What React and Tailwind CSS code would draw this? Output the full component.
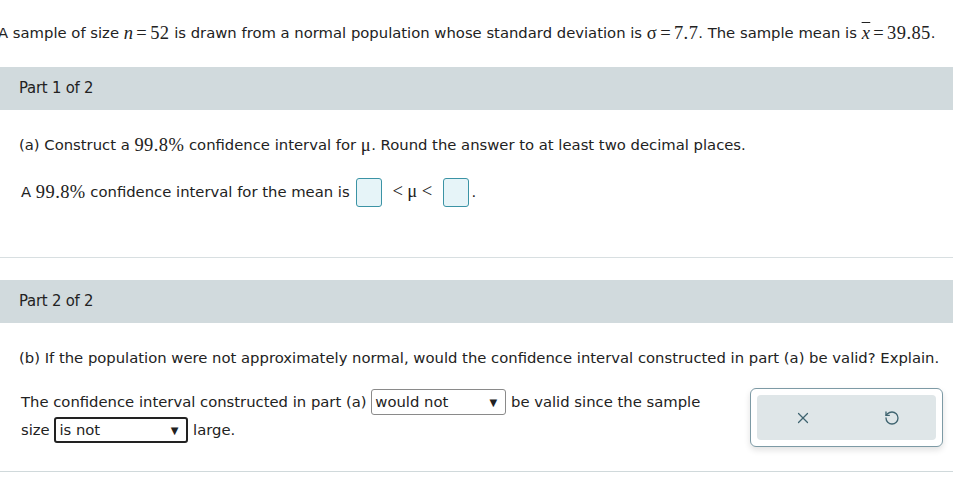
import { X, RotateCcw } from 'lucide-react';

const sans = { fontFamily: '"DejaVu Sans", Verdana, sans-serif' };

function M({ children, italic }) {
    return (
        <span className={`font-['Liberation_Serif',serif] text-[18.5px] tracking-[0.4px] leading-none ${italic ? 'italic' : ''}`}>
            {children}
        </span>
    );
}

const Eq = () => <span className="mx-[3px]">=</span>;

function AnswerBox() {
    return <span className="inline-block w-[26px] h-[29px] align-middle rounded-[3px] border border-[#3b93a5] bg-[#e6f4f8]" />;
}

function Select({ value, width, focused }) {
    return (
        <span
            className={[
                'inline-flex items-center justify-between align-middle h-[26px] pl-[3px] pr-[8px] rounded-[3px] bg-white',
                focused ? 'border-2 border-[#222]' : 'border border-[#8a8a8a]',
            ].join(' ')}
            style={{ width }}
        >
            <span>{value}</span>
            <span className="text-[10px]">▼</span>
        </span>
    );
}

function PartHeader({ children }) {
    return (
        <div className="h-[43px] bg-[#d1dadd] flex items-center pl-[19px] text-[16.5px] text-[#222] font-['DejaVu_Sans_Condensed','DejaVu_Sans',sans-serif] tracking-[-0.2px]">
            {children}
        </div>
    );
}

export default function App() {
    return (
        <div className="w-[953px] h-[482px] bg-white text-[#222] text-[14.8px] overflow-hidden" style={sans}>
            <div className="h-[67px] flex items-center -ml-[2px] pb-[1px] whitespace-nowrap">
                A sample of size&nbsp;<M italic>n</M><M><Eq />52</M>&nbsp;is drawn from a normal population whose standard deviation is&nbsp;
                <M>σ<Eq />7.7</M>. The sample mean is&nbsp;
                <M><span className="italic overline">x</span><Eq />39.85</M>.
            </div>

            <PartHeader>Part 1 of 2</PartHeader>

            <div className="pl-[19px] pt-[23px]">
                <div className="h-[24px] flex items-center">
                    (a) Construct a&nbsp;<M>99.8%</M>&nbsp;confidence interval for&nbsp;<M>μ</M>. Round the answer to at least two decimal places.
                </div>
                <div className="mt-[19px] pl-[2px] h-[32px] flex items-center">
                    A&nbsp;<M>99.8%</M>&nbsp;confidence interval for the mean is&nbsp;
                    <span className="ml-[2px]"><AnswerBox /></span>
                    <span className="mx-[10px]"><M>&lt;&thinsp;μ&thinsp;&lt;</M></span>
                    <AnswerBox />
                    <span className="ml-[3px]">.</span>
                </div>
            </div>

            <div className="mt-[49px] border-t border-[#d8dfe1]" />
            <div className="h-[22px]" />

            <PartHeader>Part 2 of 2</PartHeader>

            <div className="pl-[19px] pt-[23px]">
                <div className="h-[24px] flex items-center whitespace-nowrap">
                    (b) If the population were not approximately normal, would the confidence interval constructed in part (a) be valid? Explain.
                </div>
                <div className="flex mt-[19px] pl-[2px]">
                    <div className="flex flex-col gap-[2px]">
                        <div className="h-[26px] flex items-center">
                            The confidence interval constructed in part (a)&nbsp;
                            <Select value="would not" width="135px" />
                            &nbsp;be valid since the sample
                        </div>
                        <div className="h-[26px] flex items-center">
                            size&nbsp;<Select value="is not" width="134px" focused />&nbsp;large.
                        </div>
                    </div>
                    <div className="ml-[50px] -mt-[1px] w-[193px] h-[59px] rounded-[6px] border border-[#7d9aa5] p-[6px] bg-white shadow-[0_3px_6px_rgba(0,0,0,0.12)]">
                        <div className="h-full rounded-[4px] bg-[#dfe6e8] flex items-center justify-around text-[#3f6470]">
                            <X size={18} strokeWidth={1.6} />
                            <RotateCcw size={16} strokeWidth={2} />
                        </div>
                    </div>
                </div>
            </div>

            <div className="mt-[24px] border-t border-[#d0d9db]" />
        </div>
    );
}
